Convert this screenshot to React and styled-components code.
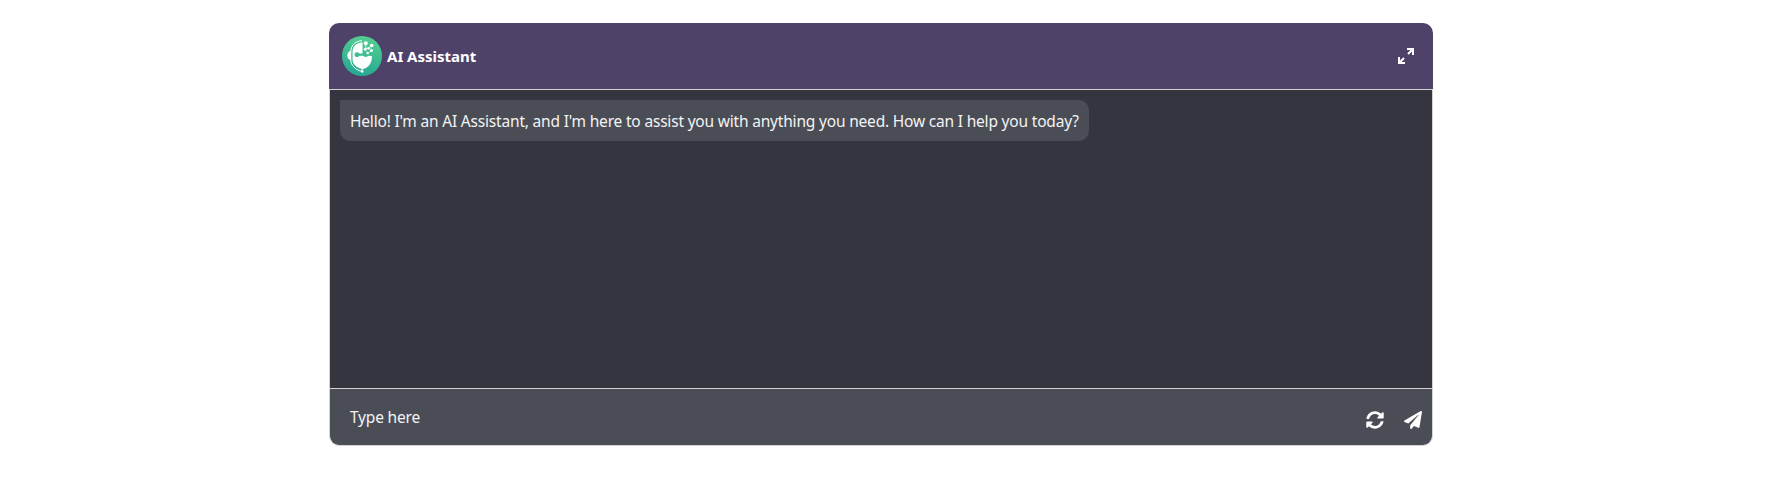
import React from "react";
import styled, { createGlobalStyle } from "styled-components";
import { FaPaperPlane, FaSyncAlt } from "react-icons/fa";

const GlobalStyle = createGlobalStyle`
  * { box-sizing: border-box; }
  body {
    margin: 0;
    background: #fff;
    font-family: "Noto Sans", "Open Sans", sans-serif;
    font-size: 15.5px;
  }
`;

const Page = styled.main`
  padding: 23px 344px 31px 329px;
`;

const Card = styled.section`
  display: flex;
  flex-direction: column;
  height: 423px;
`;

const Header = styled.header`
  display: flex;
  align-items: center;
  height: 66px;
  padding: 0 19px 0 13px;
  background: #4f4269;
  border-radius: 10px 10px 0 0;
`;

const Title = styled.h1`
  flex: 1;
  margin: 0 0 0 5px;
  color: #fff;
  font-size: 15px;
  line-height: 24px;
  font-weight: 700;
`;

const IconButton = styled.button`
  display: flex;
  padding: 0;
  border: 0;
  background: none;
  color: #fff;
`;

const Panel = styled.div`
  display: flex;
  flex-direction: column;
  flex: 1;
  border: 1px solid #d3d3d6;
  border-radius: 0 0 10px 10px;
  overflow: hidden;
`;

const Messages = styled.div`
  flex: 1;
  padding: 10px;
  background: #353540;
`;

const Bubble = styled.p`
  width: fit-content;
  height: 41px;
  margin: 0;
  padding: 9px 10px 8px;
  border-radius: 0 10px 10px 10px;
  background: #4b4d56;
  color: #f3f3f3;
  line-height: 24px;
  letter-spacing: -0.19px;
  white-space: nowrap;
`;

const InputBar = styled.footer`
  display: flex;
  align-items: center;
  height: 57px;
  padding: 6px 10px 0 20px;
  border-top: 1px solid #d3d3d6;
  background: #4b4d56;
`;

const Placeholder = styled.span`
  flex: 1;
  margin-top: -6px;
  color: #f3f3f3;
  line-height: 24px;
  letter-spacing: -0.19px;
`;

const Actions = styled.div`
  display: flex;
  align-items: center;
  gap: 20px;
`;

function ExpandIcon() {
  return (
    <svg width="16" height="16" viewBox="0 0 16 16" fill="none" stroke="currentColor" strokeWidth="2">
      <path d="M9 1h6v6M15 1l-5 5M7 15H1V9M1 15l5-5" />
    </svg>
  );
}

function Avatar() {
  return (
    <svg width="40" height="40" viewBox="0 0 40 40" aria-hidden="true">
      <defs>
        <linearGradient id="avatar" x1="0.6" y1="0" x2="0.4" y2="1">
          <stop offset="0" stopColor="#55cf90" />
          <stop offset="1" stopColor="#24a894" />
        </linearGradient>
      </defs>
      <circle cx="20" cy="20" r="20" fill="url(#avatar)" />
      <path d="M20 4.800C12.500 5 8.800 10 8.800 16v8c0 5.500 5 10 11.200 11.500" fill="none" stroke="#fff" strokeWidth="1" />
      <path d="M8.800 14.800C6.500 15.500 5.300 17 5.300 19.500s1.200 4 3.500 4.700z" fill="#fff" />
      <path d="M20.500 6.500v11h-3.200a2.500 2.500 0 1 0 0 2.300h3.500c1.500 1.500 4.500 1.500 6-.3 1 .7 2 .7 3.200.2 0 7.500-3 11.800-9.500 13.500-6-1.500-10-5-10-10v-7c0-5.500 3.500-9.500 10-9.700z" fill="#fff" />
      <path d="M20.200 32v3.500" stroke="#fff" strokeWidth="1" />
      <circle cx="20.200" cy="35.500" r="1.300" fill="#fff" />
      <g stroke="#fff" strokeWidth="0.700" fill="none">
        <path d="M23.800 7.500v6M23.800 13l3-1.500M26 17.500l3-2.800M26.800 12l3-2.500" />
      </g>
      <g fill="#fff">
        <circle cx="23.800" cy="7.200" r="2" />
        <circle cx="29.700" cy="9.500" r="1.800" />
        <circle cx="26.800" cy="12.200" r="1.300" />
        <circle cx="23.300" cy="13.200" r="1.500" />
        <circle cx="29.500" cy="14.600" r="1.500" />
        <circle cx="25.500" cy="17" r="1.200" />
      </g>
    </svg>
  );
}

export default function App() {
  return (
    <>
      <GlobalStyle />
      <Page>
        <Card>
          <Header>
            <Avatar />
            <Title>AI Assistant</Title>
            <IconButton aria-label="Expand"><ExpandIcon /></IconButton>
          </Header>
          <Panel>
            <Messages>
              <Bubble>Hello! I'm an AI Assistant, and I'm here to assist you with anything you need. How can I help you today?</Bubble>
            </Messages>
            <InputBar>
              <Placeholder>Type here</Placeholder>
              <Actions>
                <IconButton aria-label="Restart"><FaSyncAlt size={18} /></IconButton>
                <IconButton aria-label="Send"><FaPaperPlane size={18} /></IconButton>
              </Actions>
            </InputBar>
          </Panel>
        </Card>
      </Page>
    </>
  );
}
